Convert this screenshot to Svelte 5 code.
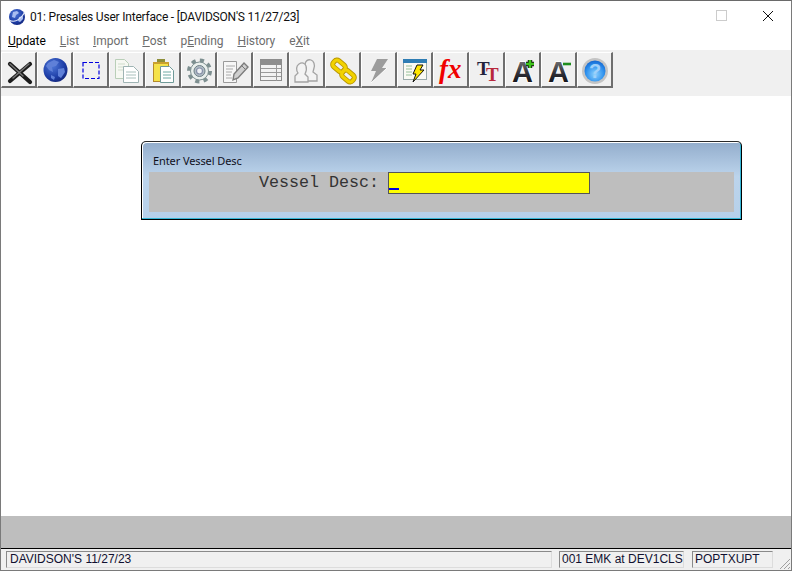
<script>
  const menus = [
    { before: "", key: "U", after: "pdate", on: true },
    { before: "", key: "L", after: "ist" },
    { before: "", key: "I", after: "mport" },
    { before: "", key: "P", after: "ost" },
    { before: "p", key: "E", after: "nding" },
    { before: "", key: "H", after: "istory" },
    { before: "e", key: "X", after: "it" },
  ];
</script>

<svg class="defs" width="0" height="0" aria-hidden="true">
  <defs>
    <radialGradient id="globe" cx="0.38" cy="0.32" r="0.8">
      <stop offset="0" stop-color="#4f78d8" />
      <stop offset="0.6" stop-color="#1f3fa8" />
      <stop offset="1" stop-color="#0e1f70" />
    </radialGradient>
    <radialGradient id="help" cx="0.5" cy="0.65" r="0.7">
      <stop offset="0" stop-color="#8fd2fd" />
      <stop offset="0.6" stop-color="#2f92ee" />
      <stop offset="1" stop-color="#0c5cca" />
    </radialGradient>
    <linearGradient id="letter" x1="0" y1="0" x2="0" y2="1">
      <stop offset="0" stop-color="#8a8a8a" />
      <stop offset="0.55" stop-color="#2e2e36" />
      <stop offset="1" stop-color="#05050a" />
    </linearGradient>
  </defs>
</svg>

<div class="window">
  <header class="titlebar">
    <svg class="appicon" width="18" height="18" viewBox="0 0 18 18">
      <circle cx="9" cy="9" r="8" fill="url(#globe)" />
      <path d="M5 4l4-1 2 2-3 2-1 3-3-1zM11 9l4-1 0 3-3 3-2-1z" fill="#a9bdf0" />
      <path d="M1 12c5 3 11 0 16-8" fill="none" stroke="#e6ecfa" stroke-width="1.2" />
    </svg>
    <span class="title">01: Presales User Interface - [DAVIDSON'S 11/27/23]</span>
    <div class="winbtns">
      <span class="maxbtn"></span>
      <svg width="12" height="12" viewBox="0 0 12 12">
        <path d="M1 1l10 10M11 1L1 11" stroke="#111" stroke-width="1" />
      </svg>
    </div>
  </header>

  <nav class="menubar">
    {#each menus as m}
      <span class="menu" class:on={m.on}>{m.before}<u>{m.key}</u>{m.after}</span>
    {/each}
  </nav>

  <div class="toolbar">
    <button class="tool">
      <svg viewBox="0 0 32 32">
        <path d="M7 10l20 18M27 10L7 27" stroke="#1c1c1c" stroke-width="4.2" stroke-linecap="round" />
        <path d="M7 10l13 12M26 10L10 24" stroke="#777" stroke-width="1.4" stroke-linecap="round" />
      </svg>
    </button>
    <button class="tool">
      <svg viewBox="0 0 32 32">
        <circle cx="16.5" cy="16" r="12" fill="url(#globe)" />
        <path d="M9 9l6-3 5 2-3 4-4 1 1 5-4-2-3-4zM19 15l6-1 1 4-4 6-3-2zM12 21l4 2-1 3-3-2z" fill="#5f80d8" />
      </svg>
    </button>
    <button class="tool">
      <svg viewBox="0 0 32 32">
        <rect x="8" y="8.5" width="16" height="16" fill="none" stroke="#0000e0" stroke-width="1.2" stroke-dasharray="4 2" />
      </svg>
    </button>
    <button class="tool">
      <svg viewBox="0 0 32 32">
        <path d="M4.5 5.5h9l4 4v15h-13z" fill="#f6f8f2" stroke="#b9cfb8" />
        <path d="M7 10h7M7 13h7M7 16h6" stroke="#cfdccb" />
        <path d="M12.5 12.5h10l5 5v11h-15z" fill="#fff" stroke="#9fb4b4" />
        <path d="M15 18h10M15 21h10M15 24h10" stroke="#a8c0bc" />
      </svg>
    </button>
    <button class="tool">
      <svg viewBox="0 0 32 32">
        <rect x="6.5" y="8.5" width="15" height="19" fill="#f5e24a" stroke="#b48a2c" />
        <rect x="10" y="5" width="8" height="4" fill="#8e8f3a" />
        <path d="M6 9h16" stroke="#c9a030" stroke-width="2" />
        <path d="M13.5 12.5h9l4 4v12h-13z" fill="#fff" stroke="#6f9a98" />
        <path d="M16 18h8M16 21h8M16 24h8" stroke="#6faaa4" />
      </svg>
    </button>
    <button class="tool">
      <svg viewBox="0 0 32 32">
        <circle cx="16.5" cy="17" r="10.5" fill="none" stroke="#7d8f90" stroke-width="4" stroke-dasharray="4.1 4.15" />
        <circle cx="16.5" cy="17" r="9" fill="#e9efec" stroke="#7d8f90" />
        <circle cx="16.5" cy="17" r="5.5" fill="#b0bcc4" stroke="#6f8088" />
        <circle cx="16.5" cy="17" r="3" fill="#eef1f4" stroke="#8790a8" stroke-width="1.2" />
      </svg>
    </button>
    <button class="tool">
      <svg viewBox="0 0 32 32">
        <path d="M4.5 7.5h13v21h-13z" fill="#f7f7f7" stroke="#9a9a9a" />
        <path d="M7 12h9M7 15h7M7 18h6M7 21h5M7 24h6" stroke="#aaa" />
        <path d="M14 26l1-6 10-11 4 4-10 11z" fill="#cfcfcf" stroke="#7c7c7c" stroke-width="1.4" />
        <path d="M22 11l4 4" stroke="#777" />
      </svg>
    </button>
    <button class="tool">
      <svg viewBox="0 0 32 32">
        <rect x="5.5" y="5.5" width="21" height="21" fill="#f2f2f2" stroke="#8d8d8d" />
        <rect x="5" y="5" width="22" height="6" fill="#8d8d8d" />
        <path d="M6 14.5h20M6 18.5h20M6 22.5h20" stroke="#9a9a9a" />
        <path d="M21.5 11v16" stroke="#9a9a9a" />
      </svg>
    </button>
    <button class="tool">
      <svg viewBox="0 0 32 32">
        <path d="M14 11c0-4 3-6 6-5 3 1 4 5 3 8l-1 4 4 3v6h-9" fill="#f3f3f3" stroke="#a3a3a3" stroke-width="1.3" />
        <path d="M4 28v-6l3-3c-2-3-2-7 1-9 3-2 6-1 7 2 1 3 0 6-1 8l3 3v5z" fill="#f3f3f3" stroke="#a3a3a3" stroke-width="1.3" />
      </svg>
    </button>
    <button class="tool">
      <svg viewBox="0 0 32 32">
        <rect x="5.5" y="8" width="13" height="8" rx="3" transform="rotate(40 12 12)" fill="none" stroke="#b89600" stroke-width="5" />
        <rect x="14.5" y="18" width="13" height="8" rx="3" transform="rotate(40 21 22)" fill="none" stroke="#b89600" stroke-width="5" />
        <rect x="5.5" y="8" width="13" height="8" rx="3" transform="rotate(40 12 12)" fill="none" stroke="#f2d200" stroke-width="3.2" />
        <rect x="14.5" y="18" width="13" height="8" rx="3" transform="rotate(40 21 22)" fill="none" stroke="#f2d200" stroke-width="3.2" />
      </svg>
    </button>
    <button class="tool">
      <svg viewBox="0 0 32 32">
        <path d="M14 5h11l-6 9h5L8 29l5-12H8z" fill="#9c9c9c" />
        <path d="M8 29l16-15" stroke="#fff" />
      </svg>
    </button>
    <button class="tool">
      <svg viewBox="0 0 32 32">
        <rect x="4.5" y="5.5" width="23" height="20" fill="#fafaf4" stroke="#9aa" />
        <rect x="4" y="5" width="24" height="4" fill="#2e7db4" />
        <path d="M7 12h6M7 15h6M7 18h6M7 21h6" stroke="#b8d4b8" stroke-width="1.4" />
        <path d="M18 11h6l-3 5h4L14 28l3-8h-3z" fill="#ffe600" stroke="#111" />
      </svg>
    </button>
    <button class="tool">
      <svg viewBox="0 0 32 32"><text class="fx" x="4" y="24">fx</text></svg>
    </button>
    <button class="tool">
      <svg viewBox="0 0 32 32">
        <text class="tt dark" x="6" y="21">T</text>
        <text class="tt red" x="15" y="27">T</text>
      </svg>
    </button>
    <button class="tool">
      <svg viewBox="0 0 32 32">
        <text class="bigA" x="5" y="28">A</text>
        <path d="M19 10h8M23 6v8" stroke="#111" stroke-width="4.4" />
        <path d="M19 10h8M23 6v8" stroke="#3fc41c" stroke-width="2.6" />
      </svg>
    </button>
    <button class="tool">
      <svg viewBox="0 0 32 32">
        <text class="bigA" x="5" y="28">A</text>
        <path d="M20 10h8" stroke="#1e8e1e" stroke-width="2.6" />
      </svg>
    </button>
    <button class="tool">
      <svg viewBox="0 0 32 32">
        <circle cx="16" cy="17" r="13" fill="#c4c4c4" />
        <circle cx="16" cy="17" r="10.5" fill="url(#help)" />
        <text class="q" x="16" y="24">?</text>
      </svg>
    </button>
  </div>

  <main class="client">
    <section class="dialog">
      <h1 class="dlgtitle">Enter Vessel Desc</h1>
      <div class="panel">
        <label class="label" for="vessel">Vessel Desc:</label>
        <div class="field" id="vessel"><span class="cursor"></span></div>
      </div>
    </section>
  </main>

  <div class="band"></div>

  <footer class="status">
    <span class="cell wide">DAVIDSON'S 11/27/23</span>
    <span class="cell user">001 EMK at DEV1CLS</span>
    <span class="cell prog">POPTXUPT</span>
    <svg class="grip" width="14" height="14" viewBox="0 0 14 14">
      <path d="M13 3L3 13M13 7l-6 6M13 11l-2 2" stroke="#a0a0a0" />
    </svg>
  </footer>
</div>

<style>
  :global(body) {
    margin: 0;
    background: #fff;
  }
  .defs {
    position: absolute;
  }
  .window {
    width: 792px;
    height: 571px;
    box-sizing: border-box;
    display: flex;
    flex-direction: column;
    border: 1px solid #7a7a7a;
    border-top-color: #6a6a6a;
    font-family: Roboto, sans-serif;
    color: #000;
    overflow: hidden;
  }
  .titlebar {
    height: 31px;
    flex: none;
    display: flex;
    align-items: center;
    padding-left: 7px;
  }
  .appicon {
    margin-right: 4px;
  }
  .title {
    font-size: 12px;
    letter-spacing: -0.2px;
    color: #111;
  }
  .winbtns {
    margin-left: auto;
    display: flex;
    align-items: center;
    gap: 35px;
    padding: 0 17px 2px 0;
  }
  .maxbtn {
    width: 9px;
    height: 9px;
    border: 1px solid #ccc;
  }
  .menubar {
    height: 18px;
    flex: none;
    display: flex;
    align-items: center;
    gap: 14px;
    padding-left: 7px;
    font-size: 12px;
    letter-spacing: -0.06px;
  }
  .menu {
    color: #6d6d6d;
  }
  .menu.on {
    color: #000;
  }
  .toolbar {
    height: 46px;
    flex: none;
    box-sizing: border-box;
    background: #f0f0f0;
    display: flex;
    padding-top: 2px;
  }
  .tool {
    width: 36px;
    height: 36px;
    padding: 0;
    box-sizing: border-box;
    display: flex;
    align-items: center;
    justify-content: center;
    background: #f0f0f0;
    border: 1px solid;
    border-color: #fff #6e6e6e #6e6e6e #fff;
    border-right-width: 2px;
    border-bottom-width: 2px;
  }
  .tool svg {
    width: 32px;
    height: 32px;
    flex: none;
    overflow: visible;
  }
  .fx {
    font: italic bold 27px "Liberation Serif", serif;
    fill: #f00000;
  }
  .tt {
    font: bold 19px "Liberation Serif", serif;
  }
  .tt.dark {
    fill: #23233c;
  }
  .tt.red {
    fill: #b8283c;
  }
  .bigA {
    font: bold 29px "Liberation Sans", sans-serif;
    fill: url(#letter);
    stroke: #fff;
    stroke-width: 1.5px;
    paint-order: stroke;
  }
  .q {
    font: bold 20px "Liberation Sans", sans-serif;
    fill: #9ed0fa;
    text-anchor: middle;
  }
  .client {
    flex: 1;
    background: #fff;
    padding: 45px 0 0 140px;
  }
  .dialog {
    width: 601px;
    height: 79px;
    box-sizing: border-box;
    border: 1px solid #000;
    border-top-color: #2a2a2a;
    border-radius: 5px 5px 0 0;
    box-shadow: inset -1px -1px 0 #35b6d6, inset 1px 1px 0 #fff;
    background: linear-gradient(#93adcc, #bcd4ec 45%, #b6d0ea);
    padding: 0 7px 7px 7px;
    display: flex;
    flex-direction: column;
  }
  .dlgtitle {
    margin: 0;
    height: 30px;
    flex: none;
    display: flex;
    align-items: center;
    padding: 7px 0 0 4px;
    box-sizing: border-box;
    font-family: "Noto Sans", sans-serif;
    font-size: 11px;
    font-weight: 400;
    letter-spacing: -0.1px;
    color: #10101c;
  }
  .panel {
    flex: 1;
    background: #bebebe;
    display: flex;
    align-items: flex-start;
    padding-left: 110px;
    gap: 9px;
  }
  .label {
    font: 16.67px/22px "Liberation Mono", monospace;
    color: #333;
  }
  .field {
    width: 202px;
    height: 22px;
    box-sizing: border-box;
    border: 1px solid #555;
    background: #ffff00;
    display: flex;
    align-items: flex-end;
    padding: 0 0 3px 0;
  }
  .cursor {
    width: 10px;
    height: 2px;
    background: #0000e0;
  }
  .band {
    height: 32px;
    flex: none;
    background: #bebebe;
    border-bottom: 1px solid #000;
  }
  .status {
    height: 21px;
    flex: none;
    background: #f0f0f0;
    display: flex;
    align-items: center;
    padding-left: 5px;
    position: relative;
    font: 12px "Liberation Sans", sans-serif;
    color: #101030;
  }
  .cell {
    height: 17px;
    flex: none;
    box-sizing: border-box;
    border: 1px solid;
    border-color: #8a8a8a #dcdcdc #dcdcdc #8a8a8a;
    padding-left: 2px;
    line-height: 15px;
    white-space: nowrap;
  }
  .wide {
    width: 546px;
    margin-right: 7px;
    padding-left: 3px;
  }
  .user {
    width: 125px;
    margin-right: 8px;
  }
  .prog {
    width: 81px;
  }
  .grip {
    position: absolute;
    right: 0;
    bottom: 0;
  }
</style>
